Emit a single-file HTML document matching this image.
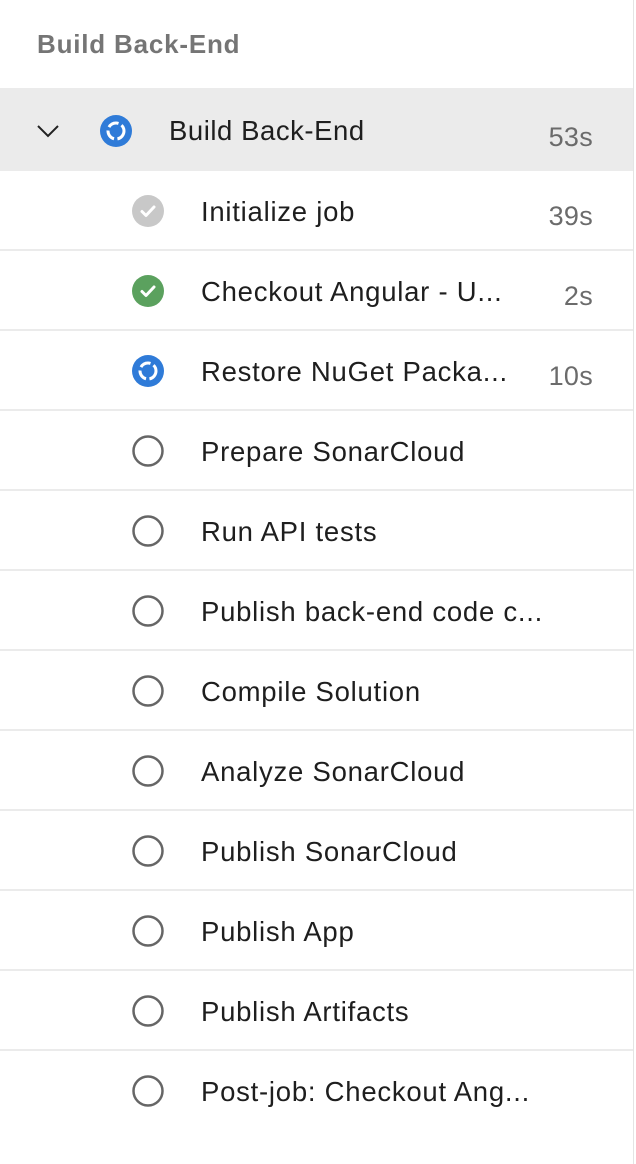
<!DOCTYPE html>
<html><head><meta charset="utf-8"><style>
*{margin:0;padding:0;box-sizing:border-box}
body{width:636px;height:1164px;background:#fff;font-family:"Liberation Sans",Arial,sans-serif;position:relative;overflow:hidden}
.vb{position:absolute;left:633px;top:0;width:1px;height:1164px;background:#e4e4e4}
.title{position:absolute;left:37px;top:29px;font-size:26px;font-weight:bold;color:#757575;letter-spacing:0.8px}
.hdr{position:absolute;left:0;top:88px;width:633px;height:83px;background:#ebebeb}
.row{position:absolute;left:0;width:633px;height:80px;border-bottom:2px solid #ebebeb}
.row.last{border-bottom:none}
.ic{position:absolute;left:132px;top:24px;width:32px;height:32px}
.tx{position:absolute;left:201px;top:25px;font-size:27.5px;letter-spacing:0.75px;color:#1e1e1e;white-space:nowrap}
.du{position:absolute;right:40px;top:30px;font-size:27px;letter-spacing:0.3px;color:#6b6b6b}
</style></head><body>
<div class="vb"></div>
<div class="title">Build Back-End</div>
<div class="hdr">
<svg style="position:absolute;left:36px;top:36px" width="24" height="14" viewBox="0 0 24 14"><path d="M2 2 L12 12 L22 2" fill="none" stroke="#222" stroke-width="2"/></svg>
<svg style="position:absolute;left:100px;top:27px" width="32" height="32" viewBox="0 0 32 32"><circle cx="16" cy="16" r="16" fill="#2f7bd8"/><circle cx="16" cy="16" r="8" fill="none" stroke="#fff" stroke-width="3" stroke-dasharray="11 3.5"/></svg>
<div class="tx" style="left:169px;top:27px;letter-spacing:0.55px">Build Back-End</div>
<div class="du" style="top:34px">53s</div>
</div>
<div class="row" style="top:171px"><svg class="ic" viewBox="0 0 32 32"><circle cx="16" cy="16" r="16" fill="#c8c8c8"/><path d="M10 16.5 L14 20.5 L22 12" fill="none" stroke="#fff" stroke-width="3" stroke-linecap="round" stroke-linejoin="round"/></svg><div class="tx">Initialize job</div><div class="du">39s</div></div>
<div class="row" style="top:251px"><svg class="ic" viewBox="0 0 32 32"><circle cx="16" cy="16" r="16" fill="#5ba15e"/><path d="M10 16.5 L14 20.5 L22 12" fill="none" stroke="#fff" stroke-width="3" stroke-linecap="round" stroke-linejoin="round"/></svg><div class="tx">Checkout Angular - U...</div><div class="du">2s</div></div>
<div class="row" style="top:331px"><svg class="ic" viewBox="0 0 32 32"><circle cx="16" cy="16" r="16" fill="#2f7bd8"/><circle cx="16" cy="16" r="8" fill="none" stroke="#fff" stroke-width="3" stroke-dasharray="11 3.5"/></svg><div class="tx">Restore NuGet Packa...</div><div class="du">10s</div></div>
<div class="row" style="top:411px"><svg class="ic" viewBox="0 0 32 32"><circle cx="16" cy="16" r="14.5" fill="none" stroke="#666" stroke-width="2.5"/></svg><div class="tx">Prepare SonarCloud</div></div>
<div class="row" style="top:491px"><svg class="ic" viewBox="0 0 32 32"><circle cx="16" cy="16" r="14.5" fill="none" stroke="#666" stroke-width="2.5"/></svg><div class="tx">Run API tests</div></div>
<div class="row" style="top:571px"><svg class="ic" viewBox="0 0 32 32"><circle cx="16" cy="16" r="14.5" fill="none" stroke="#666" stroke-width="2.5"/></svg><div class="tx">Publish back-end code c...</div></div>
<div class="row" style="top:651px"><svg class="ic" viewBox="0 0 32 32"><circle cx="16" cy="16" r="14.5" fill="none" stroke="#666" stroke-width="2.5"/></svg><div class="tx">Compile Solution</div></div>
<div class="row" style="top:731px"><svg class="ic" viewBox="0 0 32 32"><circle cx="16" cy="16" r="14.5" fill="none" stroke="#666" stroke-width="2.5"/></svg><div class="tx">Analyze SonarCloud</div></div>
<div class="row" style="top:811px"><svg class="ic" viewBox="0 0 32 32"><circle cx="16" cy="16" r="14.5" fill="none" stroke="#666" stroke-width="2.5"/></svg><div class="tx">Publish SonarCloud</div></div>
<div class="row" style="top:891px"><svg class="ic" viewBox="0 0 32 32"><circle cx="16" cy="16" r="14.5" fill="none" stroke="#666" stroke-width="2.5"/></svg><div class="tx">Publish App</div></div>
<div class="row" style="top:971px"><svg class="ic" viewBox="0 0 32 32"><circle cx="16" cy="16" r="14.5" fill="none" stroke="#666" stroke-width="2.5"/></svg><div class="tx">Publish Artifacts</div></div>
<div class="row last" style="top:1051px"><svg class="ic" viewBox="0 0 32 32"><circle cx="16" cy="16" r="14.5" fill="none" stroke="#666" stroke-width="2.5"/></svg><div class="tx">Post-job: Checkout Ang...</div></div>
</body></html>
